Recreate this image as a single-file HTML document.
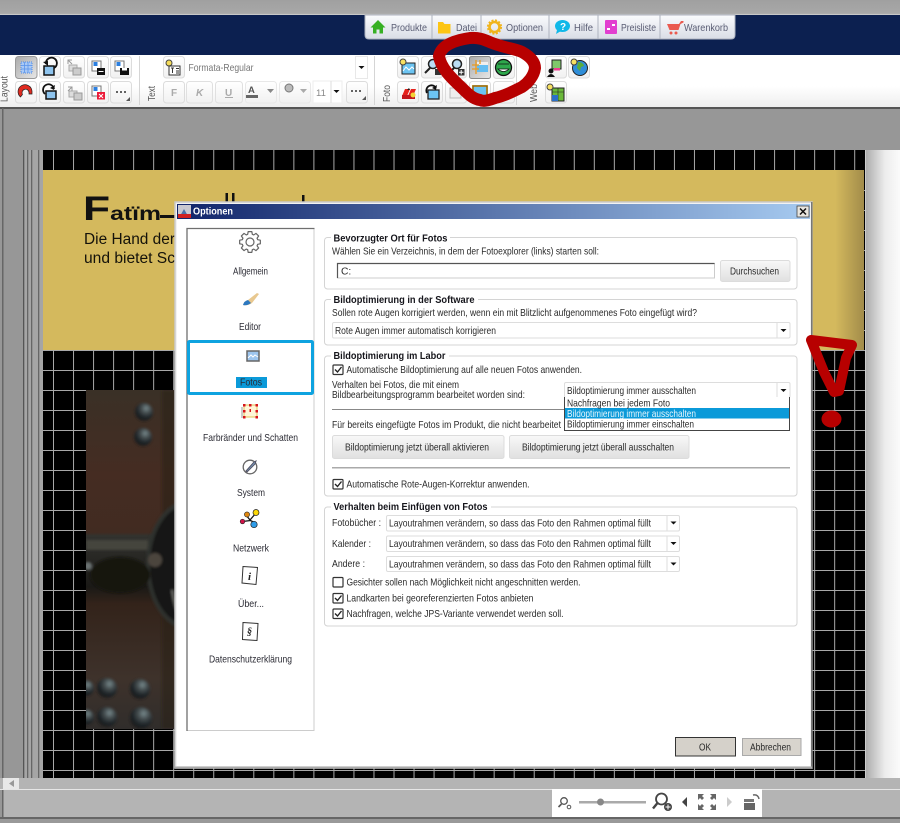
<!DOCTYPE html>
<html lang="de">
<head>
<meta charset="utf-8">
<title>Optionen</title>
<style>
html,body{margin:0;padding:0;width:900px;height:823px;overflow:hidden;background:#979797}
svg{display:block;filter:blur(.35px)}
text{font-family:"Liberation Sans",sans-serif;font-size:10.3px;fill:#2a2a2a}
.b{font-weight:bold;fill:#16161c;font-size:10.3px}
.l{fill:#2a2a33;font-size:10.2px}
.tab{fill:#5a5d74;font-size:10.4px}
.side{fill:#555;font-size:9.8px}
.gp{fill:#fff;stroke:#d4d4d4;stroke-width:1}
.cb{fill:#fff;stroke:#333;stroke-width:1.2}
.ck{fill:none;stroke:#222;stroke-width:1.4}
.sep{stroke:#d5d5d5;stroke-width:1}
</style>
</head>
<body>
<svg width="900" height="823" viewBox="0 0 900 823" xmlns="http://www.w3.org/2000/svg">
<defs>
<linearGradient id="top" x1="0" y1="0" x2="0" y2="1"><stop offset="0" stop-color="#a0a0a0"/><stop offset=".9" stop-color="#a8a8a8"/><stop offset="1" stop-color="#d8d8d8"/></linearGradient>
<linearGradient id="tb" x1="0" y1="0" x2="0" y2="1"><stop offset="0" stop-color="#fff"/><stop offset=".6" stop-color="#fff"/><stop offset="1" stop-color="#eee"/></linearGradient>
<linearGradient id="btn" x1="0" y1="0" x2="0" y2="1"><stop offset="0" stop-color="#fff"/><stop offset="1" stop-color="#f1f1f1"/></linearGradient>
<linearGradient id="act" x1="0" y1="0" x2="1" y2="1"><stop offset="0" stop-color="#aaa"/><stop offset="1" stop-color="#e8e8e8"/></linearGradient>
<linearGradient id="tabg" x1="0" y1="0" x2="0" y2="1"><stop offset="0" stop-color="#fafbfd"/><stop offset="1" stop-color="#d9dde6"/></linearGradient>
<linearGradient id="gold" x1="0" y1="0" x2="1" y2="0"><stop offset="0" stop-color="#d4b95d"/><stop offset=".965" stop-color="#d4b95d"/><stop offset="1" stop-color="#a28c4a"/></linearGradient>
<linearGradient id="rp" x1="0" y1="0" x2="1" y2="0"><stop offset="0" stop-color="#adadad"/><stop offset=".55" stop-color="#ececec"/><stop offset="1" stop-color="#fbfbfb"/></linearGradient>
<linearGradient id="title" x1="0" y1="0" x2="1" y2="0"><stop offset="0" stop-color="#10246a"/><stop offset="1" stop-color="#a6caf0"/></linearGradient>
<linearGradient id="wb" x1="0" y1="0" x2="0" y2="1"><stop offset="0" stop-color="#f8f8f8"/><stop offset="1" stop-color="#e0e0e0"/></linearGradient>
<linearGradient id="ph" x1="0" y1="0" x2="0" y2="1"><stop offset="0" stop-color="#3a3026"/><stop offset=".25" stop-color="#452c22"/><stop offset=".42" stop-color="#412b21"/><stop offset=".43" stop-color="#32322e"/><stop offset=".58" stop-color="#1a1916"/><stop offset=".63" stop-color="#33231a"/><stop offset=".85" stop-color="#3e322b"/><stop offset="1" stop-color="#302d2b"/></linearGradient>
<radialGradient id="bolt" cx=".62" cy=".3" r=".75"><stop offset="0" stop-color="#77898c"/><stop offset=".35" stop-color="#434b4d"/><stop offset=".7" stop-color="#1c2226"/><stop offset="1" stop-color="#1e1c1a"/></radialGradient>
<filter id="soft"><feGaussianBlur stdDeviation="1.4"/></filter>
<g id="b"><rect x=".5" y=".5" width="21" height="21.5" rx="3" fill="url(#btn)" stroke="#dcdcdc"/></g>
</defs>

<!-- backdrop -->
<rect width="900" height="823" fill="#979797"/>
<rect width="900" height="15" fill="url(#top)"/>
<rect y="15" width="900" height="40" fill="#0c2050"/>
<rect y="55" width="900" height="52" fill="url(#tb)"/>
<rect y="107" width="900" height="2" fill="#555"/>
<rect x="2" y="108" width="1.5" height="712" fill="#666"/>

<!-- spine -->
<rect x="23" y="150" width="20" height="628" fill="#a5a5a5"/>
<rect x="23" y="150" width="1.3" height="628" fill="#555"/>
<rect x="27" y="150" width="1.3" height="628" fill="#666"/>
<rect x="31" y="150" width="1.3" height="628" fill="#666"/>
<rect x="38" y="150" width="1.3" height="628" fill="#666"/>

<!-- page: black with 20px grid -->
<rect x="43" y="150" width="822" height="628" fill="#000"/>
<line x1="53" y1="464" x2="865" y2="464" stroke="#a8a8a8" stroke-width="628" stroke-dasharray="1 19.03"/>
<line x1="454" y1="190" x2="454" y2="778" stroke="#a8a8a8" stroke-width="822" stroke-dasharray="1 19"/>
<rect x="43" y="170" width="821" height="180" fill="url(#gold)"/>
<rect x="865" y="150" width="1.5" height="628" fill="#ccc"/>
<rect x="866" y="150" width="34" height="628" fill="url(#rp)"/>

<text x="83" y="220" style="font-family:'Liberation Sans',sans-serif;font-weight:bold;font-size:19px;fill:#111" textLength="78" lengthAdjust="spacingAndGlyphs"><tspan style="font-size:34px">F</tspan>atïm</text>
<rect x="160" y="215" width="15" height="3" fill="#111"/>
<rect x="225.500" y="193" width="2.500" height="9" fill="#111"/>
<rect x="232" y="193" width="2.500" height="9" fill="#111"/>
<rect x="302" y="195" width="2.500" height="7" fill="#111"/>
<text x="84" y="244" style="font-size:15.5px;fill:#14120a" textLength="91" lengthAdjust="spacingAndGlyphs">Die Hand der</text>
<text x="84" y="263" style="font-size:15.5px;fill:#14120a" textLength="91" lengthAdjust="spacingAndGlyphs">und bietet Sc</text>

<!-- photo -->
<svg x="86" y="390" width="89" height="339" viewBox="86 390 89 339">
<rect x="86" y="390" width="89" height="339" fill="url(#ph)"/>
<g filter="url(#soft)">
<rect x="162" y="390" width="13" height="339" fill="#2c2118" opacity=".55"/>
<rect x="86" y="540" width="62" height="10" fill="#45443e"/>
<ellipse cx="188" cy="565" rx="40" ry="62" fill="#181816" stroke="#2f312e" stroke-width="4"/>
<path d="M172 590q3 20 10 32" fill="none" stroke="#74746f" stroke-width="1.800"/>
<circle cx="155" cy="560" r="7" fill="#4b453e"/>
<circle cx="88" cy="566" r="4" fill="#6b7272"/>
<ellipse cx="120" cy="575" rx="30" ry="18" fill="#131210"/>
<circle cx="144" cy="412" r="9" fill="url(#bolt)"/>
<circle cx="143" cy="437" r="9" fill="url(#bolt)"/>
<circle cx="86" cy="688" r="8" fill="url(#bolt)"/>
<circle cx="107" cy="688" r="10" fill="url(#bolt)"/>
<circle cx="140" cy="689" r="10" fill="url(#bolt)"/>
<circle cx="86" cy="717" r="8" fill="url(#bolt)"/>
<circle cx="107" cy="717" r="10" fill="url(#bolt)"/>
<circle cx="141" cy="718" r="11" fill="url(#bolt)"/>
</g>
</svg>

<!-- scrollbar and bottom -->
<rect y="778" width="900" height="11" fill="#b4b4b4"/>
<rect x="3" y="778" width="16" height="11" fill="#e8e8e8"/>
<path d="M14 780v7l-5-3.500z" fill="#999"/>
<rect y="789" width="900" height="1" fill="#e6e6e6"/>
<rect x="3.500" y="790" width="897" height="27" fill="#b4b4b4"/>
<rect y="817" width="900" height="2" fill="#666"/>
<rect y="819" width="900" height="4" fill="#999"/>
<rect x="552" y="789" width="210" height="28" fill="#fff"/>
<circle cx="564" cy="801" r="3.300" fill="none" stroke="#555" stroke-width="1.300"/><path d="M561.500 804l-3 3" stroke="#555" stroke-width="1.600"/><circle cx="569" cy="807" r="1.800" fill="none" stroke="#555"/>
<rect x="579" y="801" width="67" height="2.500" fill="#aaa"/>
<circle cx="600.500" cy="802" r="3.500" fill="#888"/>
<circle cx="661.500" cy="799" r="5.500" fill="none" stroke="#444" stroke-width="1.800"/><path d="M657.500 803l-4.500 5.500" stroke="#444" stroke-width="2.400"/><circle cx="668" cy="807" r="4" fill="#444"/><path d="M665.500 807h5M668 804.500v5" stroke="#fff"/>
<path d="M687 797v10l-5-5z" fill="#444"/>
<g fill="#666"><path d="M698 794h6l-2 2 2 2-2 2-2-2-2 2z"/><path d="M716 794h-6l2 2-2 2 2 2 2-2 2 2z"/><path d="M698 810h6l-2-2 2-2-2-2-2 2-2-2z"/><path d="M716 810h-6l2-2-2-2 2-2 2 2 2-2z"/></g>
<path d="M727 797v10l5-5z" fill="#ccc"/>
<g fill="#777"><rect x="744" y="799" width="10" height="3"/><rect x="744" y="803" width="11" height="7" fill="#666"/></g>
<path d="M753 795q5-1 6 4" fill="none" stroke="#666" stroke-width="1.500"/>

<!-- top tabs -->
<g stroke="#aeb3bf" fill="url(#tabg)">
<path d="M365 15h67v24h-63q-4 0-4-4z"/>
<rect x="432" y="15" width="49" height="24"/>
<rect x="481" y="15" width="68" height="24"/>
<rect x="549" y="15" width="49" height="24"/>
<rect x="598" y="15" width="62" height="24"/>
<path d="M660 15h75v20q0 4-4 4h-71z"/>
</g>
<path d="M378 20l7.500 7.500h-2.500v6h-3.500v-4h-3v4H373v-6h-2.500z" fill="#37b024"/>
<path d="M438 22h5l1.500 2h6v9.500h-12.500z" fill="#fdc514"/>
<circle cx="494.500" cy="27" r="5" fill="none" stroke="#f0b41c" stroke-width="2.600"/>
<circle cx="494.500" cy="27" r="6.800" fill="none" stroke="#f0b41c" stroke-width="1.600" stroke-dasharray="2 1.600"/>
<ellipse cx="562.500" cy="26" rx="7.500" ry="6" fill="#10b8e8"/><path d="M557 30l-1 4 5-3z" fill="#10b8e8"/>
<text x="560" y="30" style="font-size:10px;font-weight:bold;fill:#fff">?</text>
<rect x="605" y="20" width="12" height="14" rx="1" fill="#e23fd0"/><rect x="612" y="24" width="3" height="2" fill="#fff"/><rect x="607" y="28" width="3" height="2" fill="#fff"/>
<path d="M667 24h12l2-3h2.500v1.500l-3 1.500-2 6h-9z" fill="#ea5a50"/><circle cx="671" cy="33" r="1.500" fill="#ea5a50"/><circle cx="676" cy="33" r="1.500" fill="#ea5a50"/>
<text class="tab" x="391" y="31" textLength="36" lengthAdjust="spacingAndGlyphs">Produkte</text>
<text class="tab" x="456" y="31" textLength="21" lengthAdjust="spacingAndGlyphs">Datei</text>
<text class="tab" x="506" y="31" textLength="37" lengthAdjust="spacingAndGlyphs">Optionen</text>
<text class="tab" x="574" y="31" textLength="19" lengthAdjust="spacingAndGlyphs">Hilfe</text>
<text class="tab" x="621" y="31" textLength="35" lengthAdjust="spacingAndGlyphs">Preisliste</text>
<text class="tab" x="684" y="31" textLength="44" lengthAdjust="spacingAndGlyphs">Warenkorb</text>

<!-- toolbar separators -->
<path class="sep" d="M139.500 56v49M374.500 56v49M516.500 56v49"/>
<text class="side" transform="translate(7.500 102) rotate(-90)" textLength="26" lengthAdjust="spacingAndGlyphs">Layout</text>
<text class="side" transform="translate(155 101) rotate(-90)" textLength="15" lengthAdjust="spacingAndGlyphs">Text</text>
<text class="side" transform="translate(390 102) rotate(-90)" textLength="17" lengthAdjust="spacingAndGlyphs">Foto</text>
<text class="side" transform="translate(537 102) rotate(-90)" textLength="18" lengthAdjust="spacingAndGlyphs">Web</text>

<!-- Layout group -->
<rect x="15.500" y="56.500" width="21.500" height="22" rx="3" fill="url(#act)" stroke="#999"/>
<rect x="21" y="62" width="11" height="11" fill="#a9c9f5" stroke="#4d8be8" stroke-dasharray="1 1"/><path d="M24.500 62v11M28 62v11M21 65.500h11M21 69h11" stroke="#5a93ea" stroke-width=".8"/>
<use href="#b" x="39" y="56"/>
<rect x="44" y="66" width="10" height="9" fill="#8ec4ee" stroke="#111" stroke-width="1.500"/><path d="M46 64a5.500 5.500 0 1 1 8 4" fill="none" stroke="#111" stroke-width="1.800"/><path d="M43 62l5-1v5z" fill="#111"/>
<use href="#b" x="63" y="56"/>
<rect x="69" y="65" width="8" height="6" fill="#ddd" stroke="#aaa"/><rect x="73" y="68" width="8" height="7" fill="#ccc" stroke="#999"/><path d="M68 60l4 4M68 64v-4h4" stroke="#999" fill="none"/>
<use href="#b" x="87" y="56"/>
<rect x="92" y="61" width="9" height="10" fill="#fff" stroke="#777"/><rect x="93.500" y="62" width="4" height="4" fill="#2b7fe0"/><rect x="97" y="68" width="8" height="7" fill="#111"/><path d="M98.500 71.500h5" stroke="#fff"/>
<use href="#b" x="110" y="56"/>
<rect x="115" y="61" width="9" height="10" fill="#fff" stroke="#777"/><rect x="116.500" y="62" width="4" height="4" fill="#2b7fe0"/><rect x="120" y="68" width="9" height="7" fill="#111"/><rect x="122" y="68" width="5" height="2.500" fill="#fff"/>
<use href="#b" x="15" y="81"/>
<path d="M25 86h3v3h-1.500a3.500 3.500 0 1 0 2 6.500l2.500 2a7 7 0 1 1-6-11.500z" transform="rotate(90 26 92)" fill="#e02b20" stroke="#222" stroke-width=".7"/>
<use href="#b" x="39" y="81"/>
<rect x="46" y="91" width="10" height="8" fill="#8ec4ee" stroke="#111" stroke-width="1.500"/><path d="M54 89a5.500 5.500 0 1 0-9 5" fill="none" stroke="#111" stroke-width="1.800"/><path d="M55 85l-1 5-4-2z" fill="#111"/>
<use href="#b" x="63" y="81"/>
<rect x="69" y="91" width="8" height="6" fill="#ddd" stroke="#aaa"/><rect x="74" y="93" width="8" height="7" fill="#ccc" stroke="#999"/><path d="M68 91l4-4M68 87h4v4" stroke="#999" fill="none"/>
<use href="#b" x="87" y="81"/>
<rect x="92" y="86" width="9" height="10" fill="#fff" stroke="#777"/><rect x="93.500" y="87" width="4" height="4" fill="#2b7fe0"/><rect x="97" y="92" width="8" height="7.500" fill="#ec1c3a"/><path d="M99 94l4 4M103 94l-4 4" stroke="#fff"/>
<use href="#b" x="110" y="81"/>
<circle cx="117" cy="92" r="1" fill="#333"/><circle cx="121" cy="92" r="1" fill="#333"/><circle cx="125" cy="92" r="1" fill="#333"/><path d="M130 97v4h-4z" fill="#555"/>

<!-- Text group -->
<use href="#b" x="163" y="56"/>
<circle cx="169" cy="63" r="3" fill="#f5dc5a" stroke="#444"/><rect x="169" y="66" width="11" height="9" fill="#fff" stroke="#333"/><path d="M171 68h3M172.500 68v5M176 68.500h3M176 71h3M176 73h3" stroke="#333"/>
<rect x="187" y="56" width="167" height="22" fill="#fff"/>
<text x="188.500" y="71" style="fill:#777;font-size:10.4px" textLength="65" lengthAdjust="spacingAndGlyphs">Formata-Regular</text>
<rect x="355.500" y="56.500" width="12" height="22" fill="#fff" stroke="#e8e8e8"/><path d="M358.500 66h6l-3 3z" fill="#111"/>
<use href="#b" x="163" y="81"/><text x="171" y="96" style="font-weight:bold;fill:#aaa;font-size:10px">F</text>
<rect x="186.500" y="81.500" width="26" height="21.500" rx="3" fill="url(#btn)" stroke="#e0e0e0"/><text x="196" y="96" style="font-weight:bold;font-style:italic;fill:#aaa;font-size:10px">K</text>
<rect x="215.500" y="81.500" width="27" height="21.500" rx="3" fill="url(#btn)" stroke="#e0e0e0"/><text x="225" y="96" style="font-weight:bold;fill:#aaa;font-size:10px">U</text><rect x="225" y="97" width="8" height="1" fill="#aaa"/>
<rect x="245.500" y="81.500" width="31" height="21.500" rx="3" fill="url(#btn)" stroke="#e8e8e8"/><text x="248" y="93" style="font-weight:bold;fill:#555;font-size:9.500px">A</text><rect x="246" y="95" width="12" height="3" fill="#666"/><path d="M267 89h7l-3.500 4z" fill="#888"/>
<rect x="279.500" y="81.500" width="31" height="21.500" rx="3" fill="url(#btn)" stroke="#e8e8e8"/><circle cx="289" cy="88" r="4" fill="#bbb" stroke="#777"/><path d="M300 89h7l-3.500 4z" fill="#aaa"/>
<rect x="313" y="81" width="29" height="22" fill="#fff" stroke="#eee"/><text x="316" y="96" style="fill:#888;font-size:9.500px">11</text><path d="M331 81v22" stroke="#ddd"/><path d="M333.500 90h6l-3 3z" fill="#111"/>
<use href="#b" x="346" y="81"/>
<circle cx="352" cy="91" r="1" fill="#333"/><circle cx="356" cy="91" r="1" fill="#333"/><circle cx="360" cy="91" r="1" fill="#333"/><path d="M366 96v4h-4z" fill="#555"/>

<!-- Foto group -->
<use href="#b" x="397" y="56"/>
<rect x="402" y="63" width="13" height="11" fill="#6cc4f2" stroke="#222"/><path d="M403 71l3-4 3 3 3-3 2 2" fill="none" stroke="#fff"/><circle cx="403" cy="62" r="3" fill="#f7e060" stroke="#444"/>
<use href="#b" x="421" y="56"/>
<circle cx="433" cy="64" r="4.500" fill="#bbddf5" stroke="#222" stroke-width="1.500"/><path d="M430 68l-5 5" stroke="#222" stroke-width="2"/><rect x="435" y="69" width="6" height="6" fill="#333"/>
<use href="#b" x="445" y="56"/>
<circle cx="457" cy="64" r="4.500" fill="#bbddf5" stroke="#222" stroke-width="1.500"/><path d="M454 68l-5 5" stroke="#222" stroke-width="2"/><rect x="458" y="69" width="6.500" height="6.500" fill="#333"/><path d="M459 72.300h4.500M461.200 70v4.500" stroke="#fff"/>
<rect x="469.500" y="56.500" width="21" height="22" rx="2" fill="url(#act)" stroke="#888"/>
<rect x="477" y="65" width="11" height="7" fill="#62bdf2"/><rect x="477" y="62" width="11" height="3" fill="#eee"/><path d="M476 60v14M472 65h7M472 69h7M480 60v4" stroke="#e79a22" stroke-width="1.300"/>
<rect x="493.500" y="56.500" width="21" height="22" rx="3" fill="url(#btn)" stroke="#dcdcdc"/>
<circle cx="503.500" cy="67.500" r="8" fill="#2ea84c" stroke="#111" stroke-width="1.300"/><path d="M498 64h11M498 69q5.500 5 11 0z" fill="#fff" stroke="#111" stroke-width=".8"/>
<use href="#b" x="397" y="81"/>
<path d="M402 96l3-7h5l-3 7zM408 96l3-7h5l-3 7z" fill="#e6221c"/><path d="M402 95h13v4h-13z" fill="#c3161c"/><path d="M407 90l2-2 1 2z" fill="#1c1c1c"/><circle cx="413" cy="95" r="2.500" fill="#f2d436"/>
<use href="#b" x="421" y="81"/>
<rect x="428" y="90" width="11" height="9" fill="#6cc4f2" stroke="#222" stroke-width="1.300"/><path d="M436 88a5 5 0 1 0-9 5" fill="none" stroke="#111" stroke-width="1.800"/><path d="M437 85l-1 5-4-2z" fill="#111"/>
<use href="#b" x="445" y="81"/>
<rect x="450" y="88" width="11" height="10" fill="#eee" stroke="#bbb"/>
<use href="#b" x="469" y="81"/>
<rect x="473" y="86" width="14" height="12" fill="#6cc4f2" stroke="#d8a12a" stroke-width="2"/><rect x="473" y="86" width="14" height="12" fill="none" stroke="#333" stroke-width=".6"/>
<use href="#b" x="493" y="81"/>
<circle cx="499" cy="92" r="1" fill="#444"/><circle cx="503" cy="92" r="1" fill="#444"/><circle cx="507" cy="92" r="1" fill="#444"/>

<!-- Web group -->
<use href="#b" x="545" y="56"/>
<rect x="552" y="60" width="9" height="9" fill="#7fc76a" stroke="#222"/><rect x="554" y="68" width="6" height="2.500" fill="#ee3c90"/><circle cx="551" cy="71" r="2.500" fill="#111"/><path d="M547 77q4-6 8 0z" fill="#111"/>
<use href="#b" x="568" y="56"/>
<circle cx="580" cy="68" r="7.500" fill="#2f8dd8" stroke="#222"/><path d="M578 62q5 0 6 4l-3 1-1 4-3-3z" fill="#58ac3c"/><circle cx="574" cy="62" r="3" fill="#f7e060" stroke="#444"/>
<use href="#b" x="545" y="81"/>
<rect x="552" y="88" width="12" height="13" fill="#6ab83a" stroke="#222"/><path d="M552 92h12M558 88v13" stroke="#222" stroke-width=".6"/><rect x="552" y="95" width="6" height="6" fill="#2b6fc8"/><circle cx="550" cy="87" r="3" fill="#f7e060" stroke="#444"/>

<!-- red ellipse -->
<path d="M439 56C441 47 450 41 470 38C482 37 488 42 495 44C506 48 516 49 522 52C531 57 535 62 535 68C534 76 528 83 522 87C512 92 504 96 495 98C489 100 484 102 480 100C473 99 468 94 462 88C456 82 441 70 439 56Z" fill="none" stroke="#b70000" stroke-width="12" stroke-linejoin="round"/>

<!-- dialog -->
<rect x="175" y="202" width="637" height="566" fill="#f2f2f2"/>
<rect x="175" y="202" width="637" height="566" fill="none" stroke="#c9c9c9" stroke-width="1.500"/>
<rect x="811" y="202" width="1.500" height="566" fill="#777"/>
<rect x="175" y="766.500" width="637" height="1.500" fill="#aaa"/>
<rect x="177" y="204" width="633" height="15" fill="url(#title)"/>
<rect x="177" y="219" width="633" height="547" fill="#fff"/>
<rect x="178" y="205" width="13" height="13" fill="#c8c8d0"/><path d="M180 216l4-7 4 7z" fill="#4a70a8"/><rect x="178" y="214" width="13" height="4" fill="#d02020"/>
<text x="193" y="214.500" style="font-weight:bold;fill:#fff;font-size:10.3px" textLength="40" lengthAdjust="spacingAndGlyphs">Optionen</text>
<rect x="797" y="206" width="12" height="11" fill="#e8e6e0" stroke="#444" stroke-width=".8"/><path d="M800 208.500l6 6M806 208.500l-6 6" stroke="#111" stroke-width="1.500"/>

<!-- list -->
<rect x="187" y="228.500" width="127" height="502" fill="#fff" stroke="#ccc"/>
<path d="M187 731V228.500H314.500" fill="none" stroke="#6f6f6f" stroke-width="1.300"/>
<rect x="188.500" y="341.500" width="124" height="52" fill="#fff" stroke="#0ea3e0" stroke-width="3" rx="1"/>
<rect x="236" y="377" width="31" height="11" fill="#0b9ad9"/>

<g transform="translate(250 242)"><path d="M7.650-2.340L10.340-1.820 10.340 1.820 7.650 2.340 7.060 3.750 8.600 6.020 6.020 8.600 3.750 7.060 2.340 7.650 1.820 10.340-1.820 10.340-2.340 7.650-3.750 7.060-6.020 8.600-8.600 6.020-7.060 3.750-7.650 2.340-10.340 1.820-10.340-1.820-7.650-2.340-7.060-3.750-8.600-6.020-6.020-8.600-3.750-7.060-2.340-7.650-1.820-10.340 1.820-10.340 2.340-7.650 3.750-7.060 6.020-8.600 8.600-6.020 7.060-3.750Z" fill="#fff" stroke="#666" stroke-width="1.200" stroke-linejoin="round"/><circle r="4" fill="#fff" stroke="#666" stroke-width="1.200"/></g>
<path d="M243 305q1-4 5-5l9-7 2 1-7 9q-4 3-9 2z" fill="#e8c890"/><path d="M243 305q1-4 5-5l3 3q-4 3-8 2z" fill="#2c78c0"/>
<rect x="247" y="351" width="12" height="10" fill="#9dc5ee" stroke="#666" stroke-width="1.500"/><path d="M248 358l3-3 2 2 2-2 3 2" fill="none" stroke="#fff"/>
<rect x="244" y="405" width="13" height="12" fill="#fff6d8" stroke="#e0c25a"/><g fill="#d8141c"><rect x="243" y="404" width="2.500" height="2.500"/><rect x="249" y="404" width="2.500" height="2.500"/><rect x="255.500" y="404" width="2.500" height="2.500"/><rect x="243" y="410" width="2.500" height="2.500"/><rect x="255.500" y="410" width="2.500" height="2.500"/><rect x="243" y="416" width="2.500" height="2.500"/><rect x="255.500" y="416" width="2.500" height="2.500"/></g><rect x="249.500" y="409" width="1.500" height="3" fill="#d8141c"/><rect x="241" y="407" width="2" height="11" fill="#aaa" opacity=".6"/>
<circle cx="250" cy="467" r="6.800" fill="#fff" stroke="#666" stroke-width="1.300"/><path d="M246 471l8-9 2-1-1 3-8 8z" fill="#7a9cc0" stroke="#556"/>
<path d="M242.500 521.500l8-1 6 3M250 520l-4-5M250 520l6-7" stroke="#111" stroke-width="1.300" fill="none"/>
<circle cx="242.500" cy="521.500" r="2.300" fill="#d01248" stroke="#222" stroke-width=".6"/><circle cx="247" cy="514.500" r="2.600" fill="#e08810" stroke="#222" stroke-width=".6"/><circle cx="256" cy="512.500" r="3" fill="#fcd808" stroke="#222" stroke-width=".7"/><circle cx="254" cy="524.500" r="3.200" fill="#2f9ce8" stroke="#222" stroke-width=".7"/>
<path d="M243 566.500l14.500 1-1.500 17-14-1.500z" fill="#fff" stroke="#333" stroke-width="1"/><text x="248" y="580" style="font-family:'Liberation Serif',serif;font-style:italic;font-weight:bold;font-size:11px;fill:#222">i</text>
<path d="M243 622.500l15 1-1 17-14.500-1z" fill="#fff" stroke="#333" stroke-width="1"/><text x="247" y="635" style="font-family:'Liberation Serif',serif;font-style:italic;font-weight:bold;font-size:10px;fill:#222">§</text>

<text class="l" x="233" y="274.500" textLength="35" lengthAdjust="spacingAndGlyphs">Allgemein</text>
<text class="l" x="239" y="330" textLength="22" lengthAdjust="spacingAndGlyphs">Editor</text>
<text class="l" x="240" y="385.500" textLength="22" lengthAdjust="spacingAndGlyphs">Fotos</text>
<text class="l" x="203" y="441" textLength="95" lengthAdjust="spacingAndGlyphs">Farbränder und Schatten</text>
<text class="l" x="237" y="496" textLength="28" lengthAdjust="spacingAndGlyphs">System</text>
<text class="l" x="233" y="551.500" textLength="36" lengthAdjust="spacingAndGlyphs">Netzwerk</text>
<text class="l" x="238" y="607" textLength="26" lengthAdjust="spacingAndGlyphs">Über...</text>
<text class="l" x="209" y="662.500" textLength="83" lengthAdjust="spacingAndGlyphs">Datenschutzerklärung</text>

<!-- group boxes -->
<rect class="gp" x="324.500" y="237.500" width="472.500" height="51.500" rx="3"/>
<rect class="gp" x="324.500" y="299.500" width="472.500" height="45.500" rx="3"/>
<rect class="gp" x="324.500" y="356" width="472.500" height="140" rx="3"/>
<rect class="gp" x="324.500" y="507" width="472.500" height="119" rx="3"/>
<rect x="331" y="232" width="119" height="10" fill="#fff"/>
<rect x="331" y="294" width="147" height="10" fill="#fff"/>
<rect x="331" y="350" width="118" height="10" fill="#fff"/>
<rect x="331" y="501" width="160" height="10" fill="#fff"/>

<text class="b" x="333.500" y="241.500" textLength="114" lengthAdjust="spacingAndGlyphs">Bevorzugter Ort für Fotos</text>
<text x="332" y="254.500" textLength="267" lengthAdjust="spacingAndGlyphs">Wählen Sie ein Verzeichnis, in dem der Fotoexplorer (links) starten soll:</text>
<rect x="337.500" y="263.500" width="377" height="14.500" fill="#fff" stroke="#ccc"/><path d="M337.500 278v-14.500H714.500" fill="none" stroke="#555" stroke-width="1.200"/>
<text x="341" y="274.500">C:</text>
<rect x="720.500" y="260.500" width="69.500" height="21" rx="2" fill="url(#wb)" stroke="#dcdcdc"/>
<text x="730" y="274.500" textLength="49" lengthAdjust="spacingAndGlyphs">Durchsuchen</text>

<text class="b" x="333.500" y="303" textLength="141" lengthAdjust="spacingAndGlyphs">Bildoptimierung in der Software</text>
<text x="332" y="316" textLength="365" lengthAdjust="spacingAndGlyphs">Sollen rote Augen korrigiert werden, wenn ein mit Blitzlicht aufgenommenes Foto eingefügt wird?</text>
<rect x="332.500" y="322.500" width="457.500" height="15.500" rx="1.500" fill="#fff" stroke="#ddd"/>
<path d="M777 322.500v15.500" stroke="#ddd"/><path d="M780.500 329h6l-3 3z" fill="#111"/>
<text x="335" y="334" textLength="161" lengthAdjust="spacingAndGlyphs">Rote Augen immer automatisch korrigieren</text>

<text class="b" x="333.500" y="359" textLength="112" lengthAdjust="spacingAndGlyphs">Bildoptimierung im Labor</text>
<rect class="cb" x="333" y="365" width="10" height="9.500" rx="1"/><path class="ck" d="M335 369.500l2.500 2.500 4-5"/>
<text x="346.500" y="373" textLength="235.500" lengthAdjust="spacingAndGlyphs">Automatische Bildoptimierung auf alle neuen Fotos anwenden.</text>
<text x="332" y="388" textLength="127" lengthAdjust="spacingAndGlyphs">Verhalten bei Fotos, die mit einem</text>
<text x="332" y="398" textLength="193" lengthAdjust="spacingAndGlyphs">Bildbearbeitungsprogramm bearbeitet worden sind:</text>
<rect x="564.500" y="382.500" width="225.500" height="15" rx="1.500" fill="#fff" stroke="#ddd"/>
<path d="M777 382.500v15" stroke="#ddd"/><path d="M780.500 389h6l-3 3z" fill="#111"/>
<text x="567" y="394" textLength="129" lengthAdjust="spacingAndGlyphs">Bildoptimierung immer ausschalten</text>
<path d="M332 409.500H564" stroke="#888" stroke-width="1"/>
<text x="332" y="428" textLength="229" lengthAdjust="spacingAndGlyphs">Für bereits eingefügte Fotos im Produkt, die nicht bearbeitet</text>
<rect x="564.500" y="397" width="225" height="33" fill="#fff"/>
<path d="M564.500 397v33.500H790M789.500 397v33.500" fill="none" stroke="#444"/>
<rect x="565" y="408" width="224" height="10.500" fill="#0b9ad9"/>
<text x="567" y="406.500" textLength="103" lengthAdjust="spacingAndGlyphs">Nachfragen bei jedem Foto</text>
<text x="567" y="417" style="fill:#e8f6fc" textLength="129" lengthAdjust="spacingAndGlyphs">Bildoptimierung immer ausschalten</text>
<text x="567" y="427.500" textLength="127" lengthAdjust="spacingAndGlyphs">Bildoptimierung immer einschalten</text>
<rect x="332.500" y="435.500" width="171.500" height="23" rx="2" fill="url(#wb)" stroke="#dcdcdc"/>
<rect x="509.500" y="435.500" width="179.500" height="23" rx="2" fill="url(#wb)" stroke="#dcdcdc"/>
<text x="345" y="450.500" textLength="144" lengthAdjust="spacingAndGlyphs">Bildoptimierung jetzt überall aktivieren</text>
<text x="522" y="450.500" textLength="152" lengthAdjust="spacingAndGlyphs">Bildoptimierung jetzt überall ausschalten</text>
<rect x="332" y="467" width="458" height="1.500" fill="#aaa"/>
<rect class="cb" x="333" y="479.500" width="10" height="9.500" rx="1"/><path class="ck" d="M335 484l2.500 2.500 4-5"/>
<text x="346.500" y="487.500" textLength="183" lengthAdjust="spacingAndGlyphs">Automatische Rote-Augen-Korrektur anwenden.</text>

<text class="b" x="333.500" y="510" textLength="154" lengthAdjust="spacingAndGlyphs">Verhalten beim Einfügen von Fotos</text>
<text x="332" y="526" textLength="49" lengthAdjust="spacingAndGlyphs">Fotobücher :</text>
<text x="332" y="547" textLength="39" lengthAdjust="spacingAndGlyphs">Kalender :</text>
<text x="332" y="567" textLength="33" lengthAdjust="spacingAndGlyphs">Andere :</text>
<rect x="386.500" y="515.500" width="293" height="15.500" rx="1.500" fill="#fff" stroke="#ddd"/><path d="M667 515.500v15.500" stroke="#ddd"/><path d="M670.500 521.500h6l-3 3z" fill="#111"/>
<rect x="386.500" y="536" width="293" height="15.500" rx="1.500" fill="#fff" stroke="#ddd"/><path d="M667 536v15.500" stroke="#ddd"/><path d="M670.500 542h6l-3 3z" fill="#111"/>
<rect x="386.500" y="556.500" width="293" height="15" rx="1.500" fill="#fff" stroke="#ddd"/><path d="M667 556.500v15" stroke="#ddd"/><path d="M670.500 562.500h6l-3 3z" fill="#111"/>
<text x="389" y="526.500" textLength="262" lengthAdjust="spacingAndGlyphs">Layoutrahmen verändern, so dass das Foto den Rahmen optimal füllt</text>
<text x="389" y="547" textLength="262" lengthAdjust="spacingAndGlyphs">Layoutrahmen verändern, so dass das Foto den Rahmen optimal füllt</text>
<text x="389" y="567.500" textLength="262" lengthAdjust="spacingAndGlyphs">Layoutrahmen verändern, so dass das Foto den Rahmen optimal füllt</text>
<rect class="cb" x="333" y="577.500" width="10" height="9.500" rx="1"/>
<text x="346.500" y="585.500" textLength="234" lengthAdjust="spacingAndGlyphs">Gesichter sollen nach Möglichkeit nicht angeschnitten werden.</text>
<rect class="cb" x="333" y="593.500" width="10" height="9.500" rx="1"/><path class="ck" d="M335 598l2.500 2.500 4-5"/>
<text x="346.500" y="601.500" textLength="187" lengthAdjust="spacingAndGlyphs">Landkarten bei georeferenzierten Fotos anbieten</text>
<rect class="cb" x="333" y="609" width="10" height="9.500" rx="1"/><path class="ck" d="M335 613.500l2.500 2.500 4-5"/>
<text x="346.500" y="617" textLength="217" lengthAdjust="spacingAndGlyphs">Nachfragen, welche JPS-Variante verwendet werden soll.</text>

<!-- dialog buttons -->
<rect x="675.500" y="737.500" width="60" height="18.500" fill="#d5d1ca" stroke="#333"/>
<rect x="742.500" y="738.500" width="58.500" height="17" fill="#d8d4cd" stroke="#aaa"/>
<text x="699" y="750.500" textLength="12" lengthAdjust="spacingAndGlyphs">OK</text>
<text x="750" y="750.500" textLength="41" lengthAdjust="spacingAndGlyphs">Abbrechen</text>

<!-- red exclamation -->
<path d="M811 340L852 345L846 358L839 391L834 392L824 372Z" fill="none" stroke="#b70000" stroke-width="10" stroke-linejoin="round"/>
<ellipse cx="831.500" cy="419" rx="10" ry="8.500" fill="#b70000"/>
</svg>
</body>
</html>
